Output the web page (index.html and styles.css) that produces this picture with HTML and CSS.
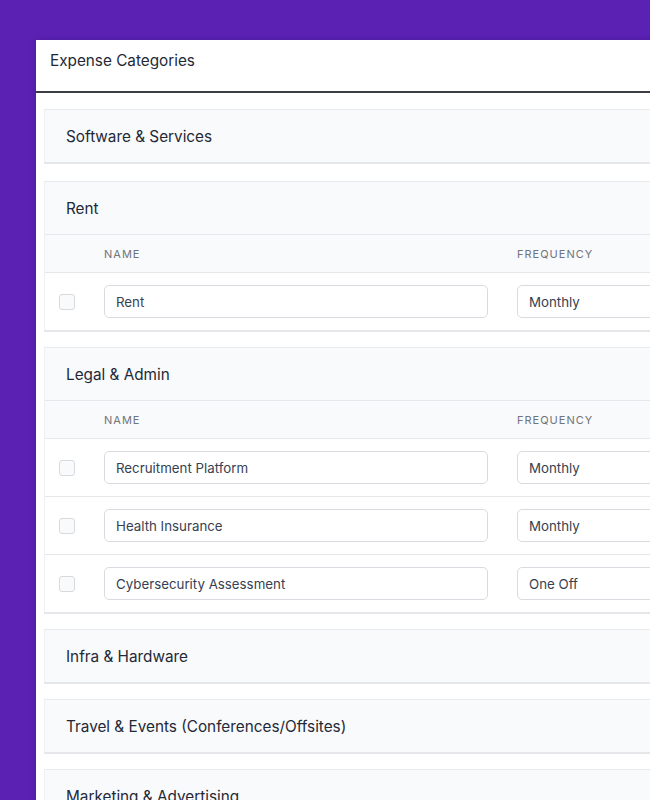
FILE: index.html
```html
<!DOCTYPE html>
<html lang="en">
<head>
    <meta charset="UTF-8">
    <meta name="viewport" content="width=device-width, initial-scale=1.0">
    <title>Expense Categories</title>
    <link rel="stylesheet" href="styles.css">
</head>
<body>
    <div class="panel">
        <div class="panel-header">Expense Categories</div>

        <div class="panel-body">
            <div class="category">
                <div class="category-title">Software &amp; Services</div>
            </div>

            <div class="category">
                <div class="category-title">Rent</div>
                <div class="row head">
                    <span></span>
                    <span class="col-label">Name</span>
                    <span class="col-label">Frequency</span>
                </div>
                <div class="row">
                    <span class="check"></span>
                    <div class="field name">Rent</div>
                    <div class="field freq">Monthly</div>
                </div>
            </div>

            <div class="category">
                <div class="category-title">Legal &amp; Admin</div>
                <div class="row head">
                    <span></span>
                    <span class="col-label">Name</span>
                    <span class="col-label">Frequency</span>
                </div>
                <div class="row">
                    <span class="check"></span>
                    <div class="field name">Recruitment Platform</div>
                    <div class="field freq">Monthly</div>
                </div>
                <div class="row">
                    <span class="check"></span>
                    <div class="field name">Health Insurance</div>
                    <div class="field freq">Monthly</div>
                </div>
                <div class="row">
                    <span class="check"></span>
                    <div class="field name">Cybersecurity Assessment</div>
                    <div class="field freq">One Off</div>
                </div>
            </div>

            <div class="category">
                <div class="category-title">Infra &amp; Hardware</div>
            </div>

            <div class="category">
                <div class="category-title">Travel &amp; Events (Conferences/Offsites)</div>
            </div>

            <div class="category">
                <div class="category-title">Marketing &amp; Advertising</div>
            </div>
        </div>
    </div>
</body>
</html>
```

FILE: styles.css
```css
body {
    font-family: Inter, "Noto Sans", sans-serif;
    background-color: #5a21b3;
    color: #1f2937;
    margin: 0;
    height: 800px;
    overflow: hidden;
}
.panel {
    margin: 40px 0 0 36px;
    width: 720px;
    background: #fff;
    min-height: 760px;
    box-shadow: 0 0 6px rgba(0, 0, 0, 0.15);
}
.panel-header {
    height: 53px;
    padding: 11px 14px 0;
    box-sizing: border-box;
    font-size: 15.3px;
    border-bottom: 2px solid #3a3d42;
}
.panel-body { padding: 16px 0 0 8px; }
.category {
    background: #f9fafb;
    border-top: 1px solid #e8eaed;
    border-left: 1px solid #eef0f2;
    box-shadow: 0 2px 0 #e5e7eb;
    margin-bottom: 17px;
}
.category:first-child { margin-bottom: 19px; }
.category-title {
    height: 52px;
    display: flex;
    align-items: center;
    padding-left: 21px;
    font-size: 15.3px;
    color: #1f2937;
}
.row {
    display: grid;
    grid-template-columns: 59px 413px 1fr;
    align-items: center;
    border-top: 1px solid #e5e7eb;
    height: 57px;
    background: #fff;
}
.row.head {
    height: 37px;
    background: #f9fafb;
}
.col-label {
    font-size: 11px;
    letter-spacing: 1px;
    text-transform: uppercase;
    color: #70747c;
}
.check {
    width: 14px;
    height: 14px;
    margin-left: 14px;
    border: 1px solid #d7dade;
    border-radius: 3px;
    background: #f9fafb;
}
.field {
    height: 33px;
    box-sizing: border-box;
    border: 1px solid #d8dbe0;
    border-radius: 5px;
    padding: 0 11px;
    display: flex;
    align-items: center;
    font-size: 13.3px;
    color: #374151;
    background: #fff;
}
.field.name { width: 384px; }
.field.freq { width: 200px; }
```
